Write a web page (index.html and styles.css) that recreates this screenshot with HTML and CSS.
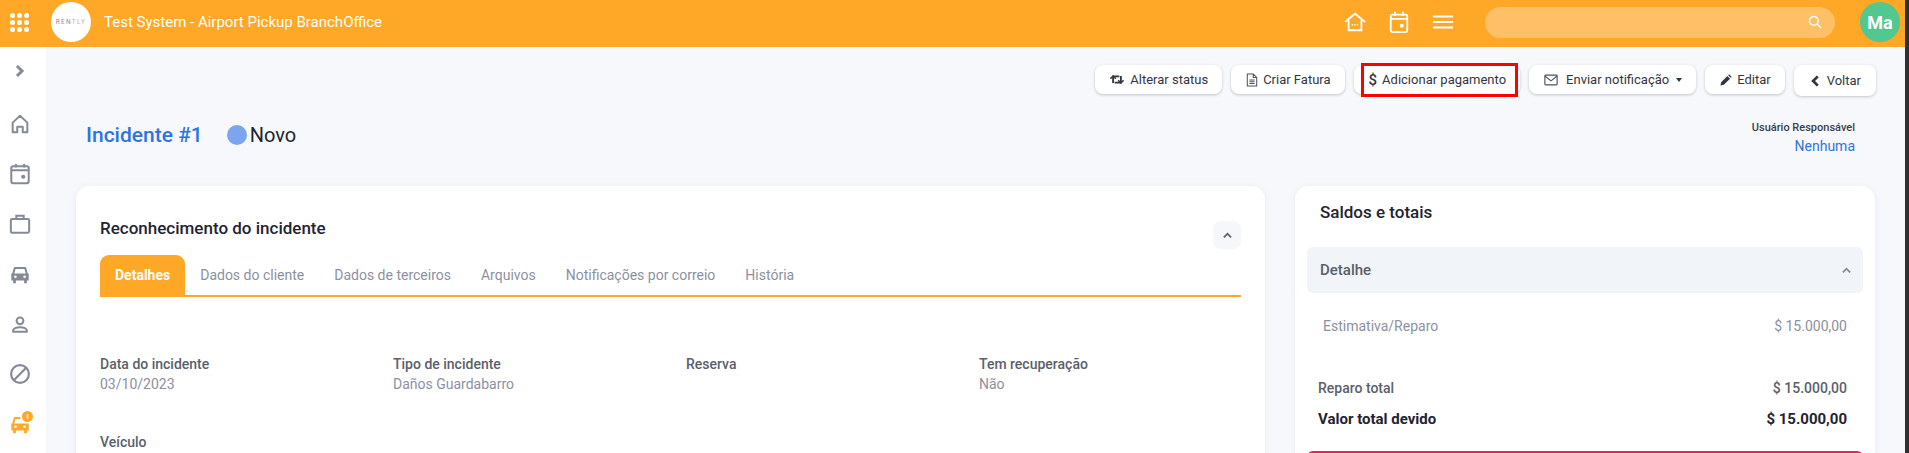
FILE: index.html
```html
<!DOCTYPE html>
<html lang="pt">
<head>
<meta charset="utf-8">
<title>Incidente #1</title>
<link rel="stylesheet" href="styles.css">
</head>
<body>
<div class="page">
<header class="topbar">
  <div class="apps">
    <i></i><i></i><i></i><i></i><i></i><i></i><i></i><i></i><i></i>
  </div>
  <div class="logo"><span>REN<b>TLY</b></span></div>
  <div class="system">Test System - Airport Pickup BranchOffice</div>
  <div class="top-icons">
    <svg class="ti" viewBox="0 0 24 24" fill="none" stroke="#fff" stroke-width="2"><path d="M1 12 12 3l11 9M5 10v11h14V10"/><path d="M8.500 15h1.500M11.300 15h1.500M14 15h1.500" stroke-width="1.600"/></svg>
    <svg class="ti" viewBox="0 0 24 24" fill="none" stroke="#fff" stroke-width="2"><rect x="3" y="4" width="18" height="19" rx="2"/><path d="M3 8.500h18M7.500 0.500v5M16.500 0.500v5"/><circle cx="15" cy="16" r="2.200" fill="#fff" stroke="none"/></svg>
    <svg class="ti" viewBox="0 0 24 24" fill="none" stroke="#fff" stroke-width="2"><path d="M1 6h22M1 12h22M1 18h22"/></svg>
  </div>
  <div class="search">
    <svg viewBox="0 0 24 24" fill="none" stroke="#fff" stroke-width="2.400"><circle cx="10" cy="10" r="7.500"/><path d="m15.500 15.500 7 7"/></svg>
  </div>
  <div class="avatar">Ma</div>
</header>
<div class="shell">
  <nav class="side">
    <svg class="chev" viewBox="0 0 12 14" fill="none" stroke="#858a99" stroke-width="3"><path d="m3 2 5 5-5 5"/></svg>
    <svg class="si" viewBox="0 0 24 24" fill="none" stroke="#858a99" stroke-width="2.200"><path d="M4 10.500 12 3l8 7.500V21h-5v-6h-6v6H4z" stroke-linejoin="round"/></svg>
    <svg class="si" viewBox="0 0 24 24" fill="none" stroke="#858a99" stroke-width="2.200"><rect x="2.500" y="3.500" width="19" height="18.500" rx="2"/><path d="M2.500 8h19M7.500 1v4M16.500 1v4"/><circle cx="15.500" cy="15" r="2.300" fill="#858a99" stroke="none"/></svg>
    <svg class="si" viewBox="0 0 24 24" fill="none" stroke="#858a99" stroke-width="2.200"><rect x="2" y="6.500" width="20" height="15" rx="1.500"/><path d="M8 6.500V3h8v3.500"/></svg>
    <svg class="si" viewBox="0 0 24 24" fill="none" stroke="#858a99" stroke-width="2.200"><path d="M4.500 12l1.800-6.500h11.400L19.500 12" stroke-linejoin="round"/><path d="M2.500 11.500h19V19h-2v3h-3v-3h-9v3h-3v-3h-2z" fill="#858a99" stroke="none"/><circle cx="7" cy="15" r="1.400" fill="#fff" stroke="none"/><circle cx="17" cy="15" r="1.400" fill="#fff" stroke="none"/></svg>
    <svg class="si" viewBox="0 0 24 24" fill="none" stroke="#858a99" stroke-width="2.200"><circle cx="12" cy="8.500" r="3.700"/><path d="M4.500 20.500v-1.500c0-2 3.500-3.500 7.500-3.500s7.500 1.500 7.500 3.500v1.500z" stroke-linejoin="round"/></svg>
    <svg class="si" viewBox="0 0 24 24" fill="none" stroke="#858a99" stroke-width="2.400"><circle cx="12" cy="12" r="9.700"/><path d="M5.500 18.500l13-13"/></svg>
    <div class="alert-wrap">
      <svg class="si" viewBox="0 0 24 24" fill="none" stroke="#ffa726" stroke-width="2.200"><path d="M4.500 12l1.800-6.500h6" stroke-linejoin="round"/><path d="M2.500 11.500h19V19h-2v3h-3v-3h-9v3h-3v-3h-2z" fill="#ffa726" stroke="none"/><circle cx="7" cy="15" r="1.400" fill="#fff" stroke="none"/><circle cx="17" cy="15" r="1.400" fill="#fff" stroke="none"/></svg>
      <span class="alert">!</span>
    </div>
  </nav>
  <main class="main">
    <div class="actions">
      <button class="btn"><svg class="bi bi-w" viewBox="0 0 18 13" fill="none" stroke="#33363f" stroke-width="2.400"><path d="M4 11V2.500h8M14 2v8.500H6"/><path d="M0.500 5.500 4 2l3.500 3.500M10.500 7.500 14 11l3.500-3.500" stroke-width="2"/></svg>Alterar status</button>
      <button class="btn"><svg class="bi bi-f" viewBox="0 0 14 16" fill="none" stroke="#4d5160" stroke-width="1.200"><path d="M1.500 1h7l4 4v10h-11zM8.500 1v4h4M4 8h6M4 10h6M4 12h6"/></svg>Criar Fatura</button>
      <button class="btn btn-hl"><span class="dollar">$</span>Adicionar pagamento</button>
      <button class="btn"><svg class="bi bi-m" viewBox="0 0 16 14" fill="none" stroke="#4d5160" stroke-width="1.300"><rect x="1" y="1.500" width="14" height="11" rx="1"/><path d="m1 2.500 7 5.500 7-5.500"/></svg>Enviar notificação<span class="caret"></span></button>
      <button class="btn"><svg class="bi bi-e" viewBox="0 0 14 14" fill="#33363f"><path d="M0.500 13.500l.9-4 7.200-7.200 3.100 3.100-7.200 7.200zM9.500 1.400l1.100-1.100 3.100 3.100-1.100 1.100z"/></svg>Editar</button>
      <button class="btn btn-back"><svg class="bi bi-c" viewBox="0 0 8 13" fill="none" stroke="#33363f" stroke-width="3"><path d="M7 1.500 2 6.500l5 5"/></svg>Voltar</button>
    </div>
    <div class="title-row">
      <h1 class="title">Incidente #1</h1>
      <span class="dot"></span>
      <span class="state">Novo</span>
      <div class="owner">
        <div class="owner-label">Usuário Responsável</div>
        <a class="owner-value">Nenhuma</a>
      </div>
    </div>
    <div class="columns">
      <section class="card left">
        <div class="card-head">
          <h2 class="card-title">Reconhecimento do incidente</h2>
          <span class="collapse"><svg viewBox="0 0 10 7" fill="none" stroke="#5d6170" stroke-width="2"><path d="m1 5.500 4-4 4 4"/></svg></span>
        </div>
        <div class="tabs">
          <span class="tab active">Detalhes</span>
          <span class="tab">Dados do cliente</span>
          <span class="tab">Dados de terceiros</span>
          <span class="tab">Arquivos</span>
          <span class="tab">Notificações por correio</span>
          <span class="tab">História</span>
        </div>
        <div class="fields">
          <div class="field"><div class="f-label">Data do incidente</div><div class="f-value">03/10/2023</div></div>
          <div class="field"><div class="f-label">Tipo de incidente</div><div class="f-value">Daños Guardabarro</div></div>
          <div class="field"><div class="f-label">Reserva</div></div>
          <div class="field"><div class="f-label">Tem recuperação</div><div class="f-value">Não</div></div>
        </div>
        <div class="f-label vehicle">Veículo</div>
      </section>
      <aside class="card right">
        <h2 class="right-title">Saldos e totais</h2>
        <div class="detail-head"><span>Detalhe</span><svg viewBox="0 0 10 7" fill="none" stroke="#858a99" stroke-width="2"><path d="m1 5.500 4-4 4 4"/></svg></div>
        <div class="row est"><span>Estimativa/Reparo</span><span>$ 15.000,00</span></div>
        <div class="row total"><span>Reparo total</span><span>$ 15.000,00</span></div>
        <div class="row due"><span>Valor total devido</span><span>$ 15.000,00</span></div>
        <div class="pink"></div>
      </aside>
    </div>
  </main>
</div>
</div>
<div class="strip"></div>
</body>
</html>
```
FILE: styles.css
```css
* { box-sizing: border-box; }
html, body { margin: 0; height: 453px; overflow: hidden; }
body { font-family: Roboto, "Liberation Sans", sans-serif; background: #f7f8fb; color: #1f2430; display: flex; }
h1, h2 { margin: 0; font-weight: 500; }
.page { flex: 1; min-width: 0; height: 453px; overflow: hidden; }
.strip { width: 4px; background: #2f2f2f; flex-shrink: 0; }

.topbar { height: 47px; padding-bottom: 3px; background: #ffa726; display: flex; align-items: center; color: #fff; }
.apps { width: 19px; margin-left: 10px; display: grid; grid-template-columns: repeat(3, 5px); gap: 2px; }
.apps i { width: 5px; height: 5px; border-radius: 50%; background: #fff; }
.logo { width: 40px; height: 40px; border-radius: 50%; background: #fff; margin-left: 22px; display: flex; align-items: center; justify-content: center; }
.logo span { font-size: 6.500px; letter-spacing: 1.300px; color: #8f8f8f; }
.logo b { font-weight: 400; color: #c9b48a; }
.system { font-size: 15px; margin-left: 13px; flex: 1; white-space: nowrap; }
.top-icons { display: flex; align-items: center; gap: 22px; }
.ti { width: 22px; height: 22px; display: block; }
.search { width: 350px; height: 31px; margin-left: 31px; border-radius: 16px; background: #fdc066; display: flex; align-items: center; justify-content: flex-end; padding-right: 13px; }
.search svg { width: 14px; height: 14px; }
.avatar { width: 40px; height: 40px; margin: 0 5px 0 25px; border-radius: 50%; background: #52c78f; font-size: 18px; font-weight: 700; display: flex; align-items: center; justify-content: center; }

.shell { display: flex; height: 406px; }
.side { width: 46px; padding-right: 6px; background: #fff; display: flex; flex-direction: column; align-items: center; flex-shrink: 0; }
.chev { width: 12px; height: 14px; margin: 17px 0 35px; }
.si { width: 22px; height: 22px; display: block; margin-bottom: 28px; }
.alert-wrap { position: relative; width: 22px; height: 22px; }
.alert-wrap .si { margin: 0; }
.alert { position: absolute; top: -2px; right: -2px; width: 11px; height: 11px; border-radius: 50%; background: #ffa726; color: #fff; font-size: 8px; font-weight: 700; line-height: 11px; text-align: center; }

.main { flex: 1; min-width: 0; height: 406px; overflow: hidden; padding: 0 30px; }
.actions { display: flex; justify-content: flex-end; align-items: flex-start; gap: 9px; padding-top: 18px; height: 67px; margin-right: -1px; }
.btn { height: 29px; border: 0; border-radius: 8px; background: #fff; box-shadow: 0 1px 3px rgba(60, 66, 90, .28); padding: 0 14px 0 15px; display: inline-flex; align-items: center; font: 400 13px Roboto, sans-serif; color: #33363f; white-space: nowrap; }
.btn-hl { position: relative; }
.btn-hl::after { content: ""; position: absolute; top: -2px; bottom: -3px; left: 7px; right: 2px; border: 3px solid #f00; }
.btn-back { height: 31px; padding: 0 15px 0 17px; }
.bi { width: 13px; height: 14px; margin-right: 6px; flex-shrink: 0; }
.bi-w { width: 14px; height: 11px; }
.bi-f { width: 12px; margin-right: 5px; }
.bi-m { width: 14px; margin-right: 8px; }
.bi-e { width: 12px; height: 12px; margin-right: 5px; }
.bi-c { width: 8px; height: 12px; margin-right: 8px; }
.dollar { font-size: 15px; font-weight: 500; margin-right: 5px; }
.caret { width: 0; height: 0; margin-left: 7px; border: 3px solid transparent; border-top: 4px solid #33363f; border-bottom: 0; }

.title-row { display: flex; align-items: center; height: 42px; padding: 0 20px 0 10px; }
.title { font-size: 21px; color: #2f73e0; font-weight: 500; }
.dot { width: 20px; height: 20px; border-radius: 50%; background: #7ba5ee; margin-left: 24px; }
.state { font-size: 20px; margin-left: 3px; color: #1f2430; }
.owner { margin: 5px 0 0 auto; text-align: right; }
.owner-label { font-weight: 500; color: #3a3e4a; font-size: 11px; line-height: 18px; }
.owner-value { font-size: 14px; color: #2f73e0; line-height: 19px; display: block; }

.columns { display: flex; gap: 30px; align-items: flex-start; margin-top: 30px; }
.card { background: #fff; border-radius: 14px; box-shadow: 0 1px 6px rgba(60, 66, 90, .08); height: 300px; flex-shrink: 0; overflow: hidden; }
.left { width: 1189px; padding: 31px 24px 0; }
.right { width: 580px; padding: 0 12px; }
.card-head { display: flex; justify-content: space-between; height: 38px; }
.card-title { font-size: 17px; line-height: 22px; color: #1f2430; }
.collapse { width: 28px; height: 28px; margin-top: 4px; background: #f5f7fa; border-radius: 8px; display: flex; align-items: center; justify-content: center; }
.collapse svg, .detail-head svg { width: 9px; height: 7px; }
.tabs { display: flex; height: 42px; border-bottom: 2px solid #ffa726; align-items: stretch; }
.tab { font-size: 14px; color: #8c91a1; padding: 0 15px 1px; display: flex; align-items: center; }
.active { background: #ffa726; color: #fff; font-weight: 700; border-radius: 9px 9px 0 0; }
.fields { display: grid; grid-template-columns: repeat(4, 293px); margin-top: 57px; }
.f-label { font-size: 14px; font-weight: 500; color: #5b5f6b; line-height: 20px; }
.f-value { font-size: 14px; color: #8c91a1; line-height: 20px; }
.vehicle { margin-top: 38px; }

.right-title { font-size: 17px; line-height: 24px; margin: 14px 0 0 13px; color: #1f2430; }
.detail-head { height: 46px; margin-top: 23px; background: #f1f4f8; border-radius: 6px; display: flex; justify-content: space-between; align-items: center; padding: 0 12px 0 13px; font-size: 15px; font-weight: 500; color: #5b5f6b; }
.row { display: flex; justify-content: space-between; font-size: 14px; line-height: 20px; }
.est { margin: 23px 16px 0; color: #8c91a1; }
.total { margin: 42px 16px 0 11px; color: #5b5f6b; font-weight: 500; }
.due { margin: 11px 16px 0 11px; color: #1f2430; font-weight: 700; font-size: 15px; }
.pink { height: 40px; margin-top: 22px; border: 2px solid #e91e63; border-radius: 6px; }
```
